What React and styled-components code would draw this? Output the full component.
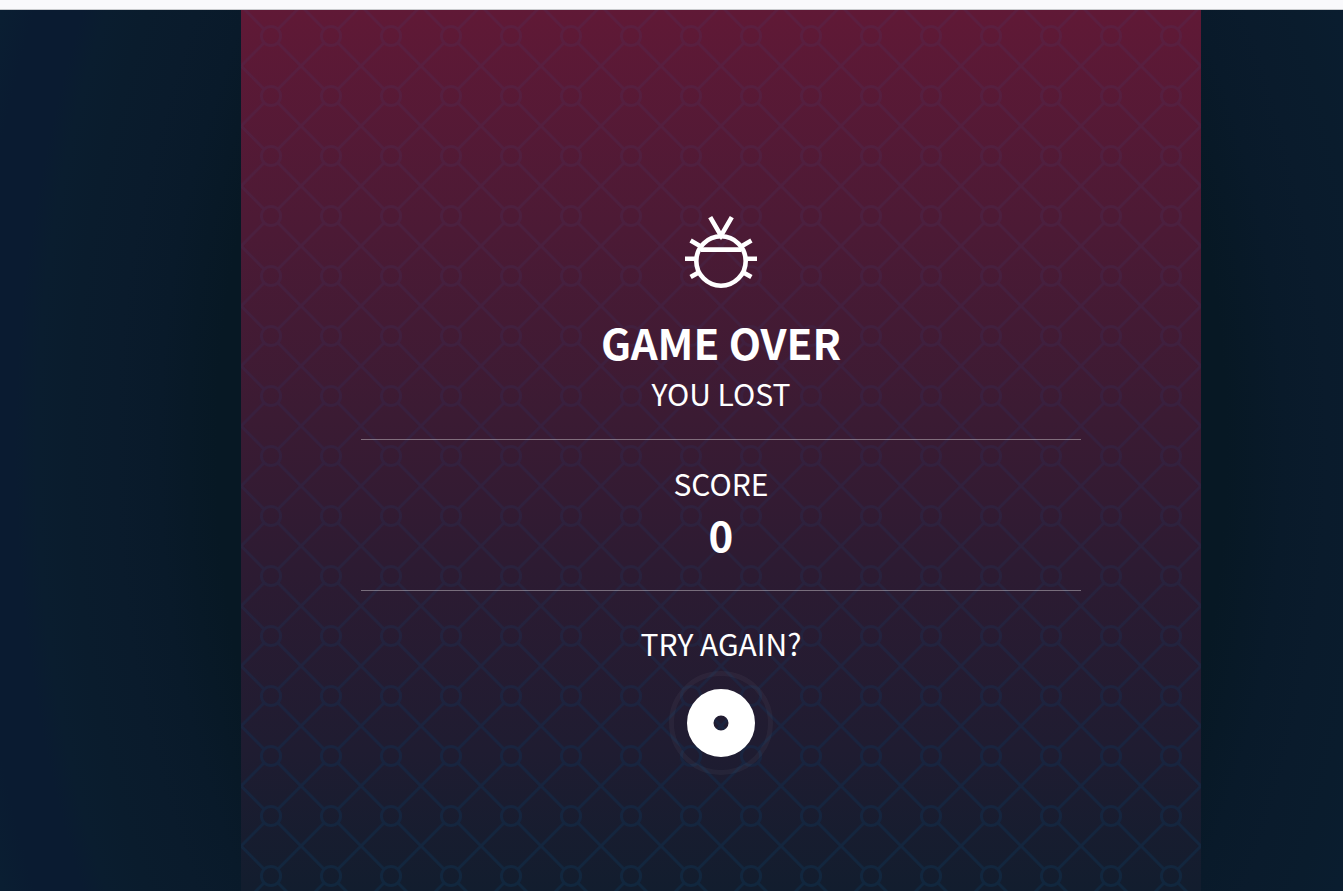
import React from 'react';
import styled, { createGlobalStyle } from 'styled-components';

const GlobalStyle = createGlobalStyle`
  *, *::before, *::after { box-sizing: border-box; }
  body {
    margin: 0;
    background: #071824;
    color: #fff;
    font-family: "Noto Sans CJK SC", "Open Sans", sans-serif;
  }
`;

const Page = styled.div`
  display: flex;
  flex-direction: column;
  min-height: 100vh;
`;

const TopBar = styled.header`
  height: 10px;
  background: #f9f9fc;
  border-bottom: 1px solid #c9cbce;
`;

const Stage = styled.main`
  flex: 1;
  display: flex;
  justify-content: center;
  padding-left: 99px;
  background: radial-gradient(
    721px 1050px at calc(50% + 50px) 50%,
    #071824 70%,
    #081927 74%,
    #091a2a 78%,
    #0a1b2c 84%,
    #0a1c2d 90%,
    #0a1d2f 95%,
    #0a1b31 98%,
    #0a1b31 104%,
    #0a1e32 108%
  );
`;

const Panel = styled.section`
  position: relative;
  width: 100%;
  max-width: 960px;
  padding: 206px 120px 111px;
  background: linear-gradient(
    #601936 0%,
    #4c1a35 25%,
    #3b1b33 46%,
    #2d1b32 63%,
    #1f1c31 84%,
    #121d2e 100%
  );
`;

const Backdrop = styled.svg`
  position: absolute;
  inset: 0;
  width: 100%;
  height: 100%;
`;

const Block = styled.div`
  position: relative;
  display: flex;
  flex-direction: column;
  align-items: center;
  text-align: center;
  padding: ${(p) => p.$pad};
  border-bottom: ${(p) => (p.$ruled ? '1px solid rgba(255, 255, 255, 0.36)' : 'none')};
`;

const BugIcon = styled.svg`
  width: 72px;
  height: 72px;
  margin-bottom: 25px;
`;

const Headline = styled.h1`
  margin: 0;
  font-size: 42px;
  line-height: 58px;
  font-weight: 700;
`;

const Score = styled.output`
  font-size: 42px;
  line-height: 58px;
  font-weight: 700;
`;

const Caption = styled.p`
  margin: 0;
  font-size: 30px;
  line-height: 44px;
  font-weight: 400;
`;

const RetryButton = styled.button`
  width: 104px;
  height: 104px;
  margin-top: 6px;
  padding: 0;
  border: 5px solid rgba(255, 255, 255, 0.04);
  border-radius: 50%;
  background: transparent;
  display: grid;
  place-items: center;
  cursor: pointer;
`;

const Disc = styled.svg`
  width: 68px;
  height: 68px;
`;

const latticeStops = [
  ['0%', '#5c1f40'],
  ['25%', '#4b203f'],
  ['46%', '#38203e'],
  ['63%', '#2a223d'],
  ['84%', '#19243f'],
  ['100%', '#11273e'],
];

function LatticeBackdrop() {
  return (
    <Backdrop aria-hidden="true">
      <defs>
        <linearGradient id="lattice-tint" x1="0" y1="0" x2="0" y2="1">
          {latticeStops.map(([offset, color]) => (
            <stop key={offset} offset={offset} stopColor={color} />
          ))}
        </linearGradient>
        <pattern id="lattice" y="-4" width="60" height="60" patternUnits="userSpaceOnUse">
          <g fill="none" stroke="#fff" strokeWidth="3">
            <circle cx="30" cy="30" r="9.6" />
            <path d="M-2 -2 23.2 23.2M36.8 36.8 62 62M62 -2 36.8 23.2M23.2 36.8 -2 62" />
          </g>
        </pattern>
        <mask id="lattice-mask">
          <rect width="100%" height="100%" fill="url(#lattice)" />
        </mask>
      </defs>
      <rect width="100%" height="100%" fill="url(#lattice-tint)" mask="url(#lattice-mask)" />
    </Backdrop>
  );
}

function Bug() {
  return (
    <BugIcon viewBox="0 0 72 72" fill="none" stroke="#fff" strokeWidth="4.6" aria-hidden="true">
      <circle cx="36" cy="45" r="24.7" />
      <path d="M16 33.6H56" />
      <path d="M25.2 1.2 36 19.6 46.8 1.2" />
      <path d="M0 42.7H10M72 42.7H62" />
      <path d="M5.6 24.6 15 30M66.4 24.6 57 30" />
      <path d="M5.6 61 13.6 56.4M66.4 61 58.4 56.4" />
    </BugIcon>
  );
}

export default function App() {
  return (
    <>
      <GlobalStyle />
      <Page>
        <TopBar />
        <Stage>
          <Panel>
            <LatticeBackdrop />
            <Block $ruled $pad="0 0 24px">
              <Bug />
              <Headline>GAME OVER</Headline>
              <Caption>YOU LOST</Caption>
            </Block>
            <Block $ruled $pad="21px 0 27px">
              <Caption as="label" htmlFor="score">SCORE</Caption>
              <Score id="score">0</Score>
            </Block>
            <Block $pad="30px 0 0">
              <Caption id="retry-label">TRY AGAIN?</Caption>
              <RetryButton type="button" aria-labelledby="retry-label">
                <Disc viewBox="0 0 68 68" aria-hidden="true">
                  <circle cx="34" cy="34" r="20.75" fill="none" stroke="#fff" strokeWidth="26.5" />
                </Disc>
              </RetryButton>
            </Block>
          </Panel>
        </Stage>
      </Page>
    </>
  );
}
